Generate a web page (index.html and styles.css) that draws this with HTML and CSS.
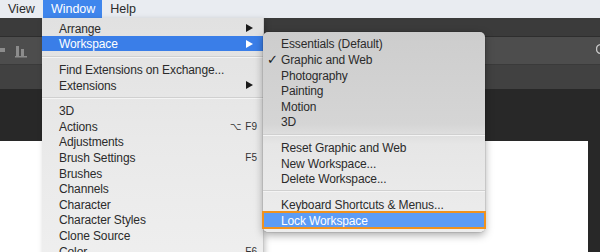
FILE: index.html
```html
<!DOCTYPE html>
<html>
<head>
<meta charset="utf-8">
<link rel="stylesheet" href="styles.css">
</head>
<body>
<div class="screen">
  <div class="menubar">
    <span class="mb-item">View</span>
    <span class="mb-item active">Window</span>
    <span class="mb-item">Help</span>
  </div>
  <div class="app">
    <div class="appbar"></div>
    <div class="options">
      <svg class="opt-icon-a" width="6" height="6" viewBox="0 0 6 6"><rect x="0" y="1" width="5" height="4" fill="#8c8c8c"/></svg>
      <svg class="opt-icon-b" width="13" height="12" viewBox="0 0 13 12"><rect x="1" y="0" width="3" height="10" fill="#8c8c8c"/><rect x="6" y="3" width="3" height="7" fill="#8c8c8c"/><rect x="0" y="10" width="12" height="1.5" fill="#8c8c8c"/></svg>
      <span class="opt-spacer"></span>
      <svg class="opt-icon-c" width="6" height="12" viewBox="0 0 6 12"><path d="M5 1.5 A4.5 4.5 0 0 0 5 10.5" fill="none" stroke="#c8c8c8" stroke-width="1.4"/></svg>
    </div>
    <div class="tabs"></div>
    <div class="docarea">
      <div class="canvas"></div>
    </div>
  </div>

  <div class="menu window-menu">
    <div class="item"><span class="label">Arrange</span><span class="arrow"></span></div>
    <div class="item selected"><span class="label">Workspace</span><span class="arrow"></span></div>
    <div class="sep"></div>
    <div class="item"><span class="label">Find Extensions on Exchange...</span></div>
    <div class="item"><span class="label">Extensions</span><span class="arrow"></span></div>
    <div class="sep"></div>
    <div class="item"><span class="label">3D</span></div>
    <div class="item"><span class="label">Actions</span><span class="key"><span class="opt">⌥</span>F9</span></div>
    <div class="item"><span class="label">Adjustments</span></div>
    <div class="item"><span class="label">Brush Settings</span><span class="key">F5</span></div>
    <div class="item"><span class="label">Brushes</span></div>
    <div class="item"><span class="label">Channels</span></div>
    <div class="item"><span class="label">Character</span></div>
    <div class="item"><span class="label">Character Styles</span></div>
    <div class="item"><span class="label">Clone Source</span></div>
    <div class="item"><span class="label">Color</span><span class="key">F6</span></div>
  </div>

  <div class="menu submenu">
    <div class="item"><span class="check"></span><span class="label">Essentials (Default)</span></div>
    <div class="item"><span class="check">✓</span><span class="label">Graphic and Web</span></div>
    <div class="item"><span class="check"></span><span class="label">Photography</span></div>
    <div class="item"><span class="check"></span><span class="label">Painting</span></div>
    <div class="item"><span class="check"></span><span class="label">Motion</span></div>
    <div class="item"><span class="check"></span><span class="label">3D</span></div>
    <div class="sep"></div>
    <div class="item"><span class="check"></span><span class="label">Reset Graphic and Web</span></div>
    <div class="item"><span class="check"></span><span class="label">New Workspace...</span></div>
    <div class="item"><span class="check"></span><span class="label">Delete Workspace...</span></div>
    <div class="sep"></div>
    <div class="item"><span class="check"></span><span class="label">Keyboard Shortcuts &amp; Menus...</span></div>
    <div class="item focused"><span class="check"></span><span class="label">Lock Workspace</span></div>
  </div>
</div>
</body>
</html>
```
FILE: styles.css
```css
* { box-sizing: border-box; }
html, body { margin: 0; padding: 0; }
body {
  width: 600px;
  height: 252px;
  overflow: hidden;
  font-family: "Liberation Sans", Arial, sans-serif;
  font-size: 12px;
  color: #2b2b2b;
}
.screen {
  position: relative;
  width: 600px;
  height: 252px;
  overflow: hidden;
  display: flex;
  flex-direction: column;
  background: #282828;
}
.menubar {
  height: 18px;
  flex: none;
  display: flex;
  align-items: stretch;
  background: #e9ecf1;
  font-size: 12.5px;
}
.mb-item {
  padding: 1px 8px 0 8px;
  line-height: 17px;
  color: #2a2a2a;
}
.mb-item.active {
  background: #3f86ed;
  color: #fff;
  padding: 1px 7px 0 8px;
}
.app {
  flex: 1;
  display: flex;
  flex-direction: column;
}
.appbar {
  height: 19px;
  flex: none;
  background: #3b3b3b;
  border-bottom: 1px solid #2e2e2e;
}
.options {
  height: 28px;
  flex: none;
  background: #4d4d4d;
  border-bottom: 1px solid #3a3a3a;
  display: flex;
  align-items: center;
}
.opt-icon-a { margin-left: 0; margin-top: -2px; }
.opt-icon-b { margin-left: 9px; margin-top: 2px; }
.opt-spacer { flex: 1; }
.opt-icon-c { margin-right: -2px; margin-top: -4px; }
.tabs {
  height: 24px;
  flex: none;
  background: #414141;
}
.docarea {
  flex: 1;
  background: #282828;
  padding: 52px 12px 0 0;
  display: flex;
}
.canvas {
  flex: 1;
  background: #ffffff;
}

/* menus */
.menu {
  position: absolute;
  display: flex;
  flex-direction: column;
  letter-spacing: -0.12px;
}
.item {
  height: 15.6px;
  line-height: 14px;
  padding-top: 2px;
  display: flex;
  align-items: center;
  white-space: nowrap;
}
.label { flex: 1; }
.sep {
  height: 10px;
  flex: none;
  display: flex;
  align-items: center;
}
.sep::before {
  content: "";
  flex: 1;
  height: 1px;
  background: #d0d0d0;
  box-shadow: 0 1px 0 #f4f4f4;
}

.window-menu {
  left: 42px;
  top: 18px;
  width: 221px;
  height: 250px;
  padding-top: 2px;
  background: linear-gradient(#e1e1e1, #e9e9e9 120px, #efefef);
  box-shadow: 1px 0 0 #c9c9c9, 2px 2px 6px rgba(0,0,0,0.25);
}
.window-menu .item { padding-left: 17px; padding-right: 6px; }
.window-menu .item.selected {
  background: #3a7ee8;
  color: #fff;
}
.arrow {
  width: 0;
  height: 0;
  border-top: 4px solid transparent;
  border-bottom: 4px solid transparent;
  border-left: 7px solid #1a1a1a;
  margin-right: 4px;
  margin-top: -1px;
}
.selected .arrow { border-left-color: #fff; }
.key {
  font-size: 10px;
  color: #333;
  letter-spacing: 0;
}
.opt {
  font-family: "DejaVu Sans", sans-serif;
  font-size: 10px;
  margin-right: 4px;
}

.submenu {
  left: 263px;
  top: 32px;
  width: 222px;
  height: 200px;
  padding-top: 3.6px;
  border-radius: 5px;
  background: linear-gradient(#cdcdcd, #d5d5d5 92px, #e6e6e6 112px, #ededed);
  box-shadow: 0 3px 9px rgba(0,0,0,0.35), 0 0 0 0.5px rgba(0,0,0,0.15);
}
.submenu .item { padding-right: 6px; }
.check {
  width: 18px;
  padding-left: 4px;
  font-family: "DejaVu Sans", sans-serif;
  font-size: 13px;
  font-weight: bold;
  color: #1a1a1a;
}
.submenu .item.focused {
  background: #5c9cf6;
  color: #fff;
  outline: 2px solid #f0921e;
  outline-offset: -1px;
  height: 16.5px;
}
```
